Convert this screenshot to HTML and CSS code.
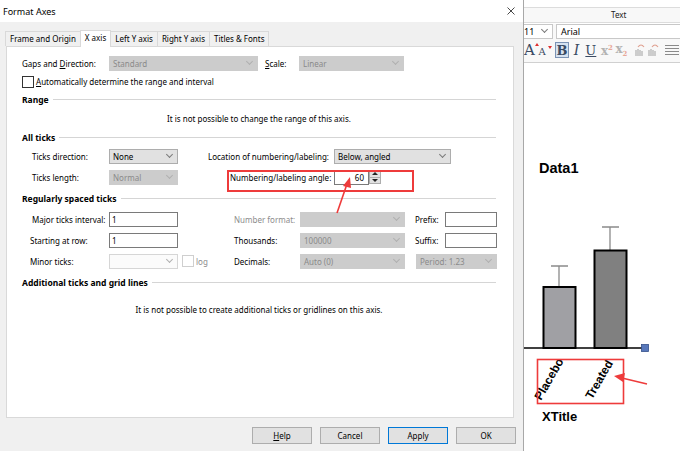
FILE: index.html
```html
<!DOCTYPE html>
<html lang="en">
<head>
  <meta charset="UTF-8">
  <title>Format Axes</title>
  <link rel="stylesheet" href="styles.css">
</head>
<body>
<div class="screen">
  <div class="dialog">
    <div class="titlebar">
      <span>Format Axes</span>
      <svg class="close" width="8" height="8" viewBox="0 0 8 8"><path d="M0.5 0.5 L7.5 7.5 M7.5 0.5 L0.5 7.5" stroke="#333" stroke-width="0.9"/></svg>
    </div>

    <div class="tabs">
      <span class="tab">Frame and Origin</span>
      <span class="tab active">X axis</span>
      <span class="tab">Left Y axis</span>
      <span class="tab">Right Y axis</span>
      <span class="tab">Titles &amp; Fonts</span>
    </div>

    <div class="panel">
      <div class="row">
        <span class="lbl w87">Gaps and <u>D</u>irection:</span>
        <div class="sel dis w149"><span>Standard</span><i class="chev"></i></div>
        <span class="lbl w34 ml7"><u>S</u>cale:</span>
        <div class="sel dis w105"><span>Linear</span><i class="chev"></i></div>
      </div>

      <div class="row check-row">
        <span class="box"></span>
        <span><u>A</u>utomatically determine the range and interval</span>
      </div>

      <div class="head h-range">Range</div>
      <div class="note n-range">It is not possible to change the range of this axis.</div>

      <div class="head h-all">All ticks</div>
      <div class="row r-dir">
        <span class="lbl pl10 w87">Ticks direction:</span>
        <div class="sel w69"><span>None</span><i class="chev"></i></div>
        <span class="lbl ml30 w126">Location of numbering/labeling:</span>
        <div class="sel w117"><span>Below, angled</span><i class="chev"></i></div>
      </div>
      <div class="row r-len">
        <span class="lbl pl10 w87">Ticks length:</span>
        <div class="sel dis w69"><span>Normal</span><i class="chev"></i></div>
        <span class="lbl ml52 w104">Numbering/labeling angle:</span>
        <div class="inp num w35">60</div>
        <div class="spin"><b class="up"></b><b class="down"></b></div>
      </div>

      <div class="head h-reg">Regularly spaced ticks</div>
      <div class="row r-major">
        <span class="lbl pl10 w87">Major ticks interval:</span>
        <div class="inp w69">1</div>
        <span class="lbl ml56 w66 gray">Number format:</span>
        <div class="sel dis w105"><span></span><i class="chev"></i></div>
        <span class="lbl ml10 w30">Prefix:</span>
        <div class="inp w52"></div>
      </div>
      <div class="row r-start">
        <span class="lbl pl8 w87">Starting at row:</span>
        <div class="inp w69">1</div>
        <span class="lbl ml56 w66">Thousands:</span>
        <div class="sel dis w105"><span>100000</span><i class="chev"></i></div>
        <span class="lbl ml10 w30">Suffix:</span>
        <div class="inp w52"></div>
      </div>
      <div class="row r-minor">
        <span class="lbl pl8 w87">Minor ticks:</span>
        <div class="sel ghost w69"><span></span><i class="chev"></i></div>
        <div class="log w56"><span class="box light"></span><span class="gray">log</span></div>
        <span class="lbl w66">Decimals:</span>
        <div class="sel dis w105"><span>Auto (0)</span><i class="chev"></i></div>
        <div class="sel dis w81 ml11"><span>Period: 1.23</span><i class="chev"></i></div>
      </div>

      <div class="head h-add">Additional ticks and grid lines</div>
      <div class="note n-add">It is not possible to create additional ticks or gridlines on this axis.</div>

      <div class="mark"></div>
      <svg class="mark-arrow" width="30" height="44" viewBox="322 128 30 44">
        <path d="M330 166 L340 137" stroke="#ee3b3b" stroke-width="1.6"/>
        <path d="M343 130 L336 139 L344 141 Z" fill="#ee3b3b"/>
      </svg>
    </div>

    <div class="buttons">
      <div class="btn"><u>H</u>elp</div>
      <div class="btn">Cancel</div>
      <div class="btn def">Apply</div>
      <div class="btn">OK</div>
    </div>
  </div>

  <div class="side">
    <div class="side-top"></div>
    <div class="side-head">Text</div>
    <div class="font-row">
      <div class="size-sel"><span>11</span><i class="chev"></i></div>
      <div class="font-inp">Arial</div>
    </div>
    <div class="toolbar">
      <span class="ic big">A<i class="tri up"></i></span>
      <span class="ic small">A<i class="tri down"></i></span>
      <span class="ic bold-btn">B</span>
      <span class="ic ital">I</span>
      <span class="ic und">U</span>
      <span class="ic sup">x<sup>2</sup></span>
      <span class="ic sub">x<sub>2</sub></span>
      <svg class="ic-svg" width="26" height="14" viewBox="0 0 26 14">
        <path d="M2 13 V7 M4 13 V6 M6 13 V7 M8 13 V8" stroke="#b0b0b0" stroke-width="1.2"/>
        <path d="M4 4 Q7 0 10 4" stroke="#e0a090" stroke-width="1.2" fill="none"/>
        <path d="M15 13 V7 M17 13 V6 M19 13 V7 M21 13 V8" stroke="#b0b0b0" stroke-width="1.2"/>
        <path d="M18 4 Q21 0 24 4" stroke="#e0a090" stroke-width="1.2" fill="none"/>
      </svg>
      <svg class="ic-svg" width="16" height="12" viewBox="0 0 16 12">
        <path d="M1 1.5 H15 M1 4.5 H15 M1 7.5 H15 M1 10.5 H15" stroke="#8a8a8a" stroke-width="1"/>
      </svg>
    </div>
    <div class="canvas">
      <svg class="chart" width="156" height="388" viewBox="524 63 156 388">
        <text x="539" y="173" class="c-title">Data1</text>
        <path d="M559 287 V266 M551 266 H568" stroke="#8a8a8a" stroke-width="1.3" fill="none"/>
        <path d="M610 250 V227 M602 227 H619" stroke="#8a8a8a" stroke-width="1.3" fill="none"/>
        <rect x="543.5" y="287" width="32" height="61" fill="#a0a0a4" stroke="#000" stroke-width="2"/>
        <rect x="594.5" y="250.5" width="32" height="97.5" fill="#808080" stroke="#000" stroke-width="2"/>
        <path d="M524 348 H642" stroke="#000" stroke-width="1.5"/>
        <rect x="641.5" y="344.5" width="7" height="7" fill="#5878bb" stroke="#34508a" stroke-width="0.8"/>
        <text class="c-lbl" transform="translate(541 401) rotate(-60)">Placebo</text>
        <text class="c-lbl" transform="translate(592 400) rotate(-60)">Treated</text>
        <rect x="537.5" y="359.5" width="86" height="44" fill="none" stroke="#ee3b3b" stroke-width="1.6"/>
        <path d="M647 384 L622 378" stroke="#ee3b3b" stroke-width="1.6"/>
        <path d="M614 376 L625 373 L623 382 Z" fill="#ee3b3b"/>
        <text x="542" y="421" class="c-x">XTitle</text>
      </svg>
    </div>
  </div>
</div>
</body>
</html>
```

FILE: styles.css
```css
* {
  box-sizing: border-box;
}
body {
  margin: 0;
  width: 680px;
  height: 451px;
  overflow: hidden;
  background: #fff;
  color: #000;
  font-family: "Noto Sans", sans-serif;
  font-size: 8px;
}
.screen {
  display: flex;
  height: 451px;
}

/* dialog */
.dialog {
  width: 523px;
  background: #f0f0f0;
  display: flex;
  flex-direction: column;
}
.titlebar {
  height: 22px;
  background: #fff;
  display: flex;
  align-items: center;
  justify-content: space-between;
  padding: 0 8px 0 3px;
  font-size: 9px;
}
.tabs {
  display: flex;
  align-items: flex-end;
  height: 15px;
  margin: 9px 0 0 5px;
}
.tab {
  height: 15px;
  line-height: 14px;
  padding: 0 4px;
  border: 1px solid #d9d9d9;
  border-bottom: none;
  margin-right: -1px;
  background: #f0f0f0;
}
.tab.active {
  height: 17px;
  background: #fff;
  margin-bottom: -1px;
  position: relative;
  z-index: 1;
}
.panel {
  position: relative;
  width: 508px;
  height: 372px;
  margin-left: 6px;
  padding: 8px 17px 0 15px;
  background: #fff;
  border: 1px solid #d9d9d9;
}
.row {
  display: flex;
  align-items: center;
  height: 16px;
}
.lbl {
  white-space: nowrap;
  flex: none;
}
.gray {
  color: #8c8c8c;
}
.w30 { width: 30px; }
.w34 { width: 34px; }
.w35 { width: 35px; }
.w52 { width: 52px; }
.w56 { width: 56px; }
.w66 { width: 66px; }
.w69 { width: 69px; }
.w81 { width: 81px; }
.w87 { width: 87px; }
.w104 { width: 104px; }
.w105 { width: 105px; }
.w117 { width: 117px; }
.w126 { width: 126px; }
.w149 { width: 149px; }
.ml7 { margin-left: 7px; }
.ml10 { margin-left: 10px; }
.ml11 { margin-left: 11px; }
.ml30 { margin-left: 30px; }
.ml52 { margin-left: 52px; }
.ml56 { margin-left: 56px; }
.pl8 { padding-left: 8px; }
.pl10 { padding-left: 10px; }

.sel {
  flex: none;
  height: 15px;
  display: flex;
  align-items: center;
  justify-content: space-between;
  padding: 0 5px 0 3px;
  background: #e1e1e1;
  border: 1px solid #adadad;
}
.sel.dis {
  background: #cccccc;
  border-color: #cccccc;
  color: #8a8a8a;
}
.sel.ghost {
  background: #fbfbfb;
  border-color: #d6d6d6;
}
.chev {
  width: 5px;
  height: 5px;
  border-right: 1px solid #7a7a7a;
  border-bottom: 1px solid #7a7a7a;
  transform: rotate(45deg);
  margin-top: -3px;
}
.sel.dis .chev,
.sel.ghost .chev {
  border-color: #b0b0b0;
}
.inp {
  flex: none;
  height: 15px;
  line-height: 13px;
  padding: 0 2px;
  background: #fff;
  border: 1px solid #7a7a7a;
}
.inp.num {
  text-align: right;
  padding-right: 4px;
}
.spin {
  width: 12px;
  height: 14px;
  display: flex;
  flex-direction: column;
  border: 1px solid #adadad;
  background: #e1e1e1;
}
.spin b {
  flex: 1;
  display: flex;
  align-items: center;
  justify-content: center;
}
.spin b::after {
  content: "";
  border-left: 3px solid transparent;
  border-right: 3px solid transparent;
}
.spin .up::after {
  border-bottom: 3px solid #222;
}
.spin .down {
  border-top: 1px solid #adadad;
}
.spin .down::after {
  border-top: 3px solid #222;
}

.check-row {
  height: 13px;
  margin-top: 4px;
}
.box {
  width: 12px;
  height: 12px;
  border: 1px solid #333;
  background: #fff;
  margin-right: 2px;
  flex: none;
}
.box.light {
  border-color: #cfcfcf;
}
.log {
  display: flex;
  align-items: center;
  padding-left: 4px;
  flex: none;
}

.head {
  display: flex;
  align-items: center;
  height: 14px;
  font-weight: bold;
  font-size: 8.5px;
  white-space: nowrap;
}
.head::after {
  content: "";
  flex: 1;
  height: 1px;
  background: #d5d5d5;
  margin-left: 4px;
}
.note {
  height: 14px;
  line-height: 14px;
  text-align: center;
}
.h-range { margin-top: 4px; }
.n-range { margin-top: 6px; }
.h-all { margin-top: 4px; }
.r-dir { margin-top: 4px; }
.r-len { margin-top: 5px; }
.h-reg { margin-top: 6px; }
.r-major { margin-top: 6px; }
.r-start { margin-top: 5px; }
.r-minor { margin-top: 5px; }
.h-add { margin-top: 6px; }
.n-add { margin-top: 14px; }

.mark {
  position: absolute;
  left: 220px;
  top: 123px;
  width: 187px;
  height: 22px;
  border: 2px solid #ee3b3b;
}
.mark-arrow {
  position: absolute;
  left: 322px;
  top: 128px;
}

.buttons {
  display: flex;
  justify-content: flex-end;
  gap: 8px;
  padding: 9px 7px 0 0;
}
.btn {
  width: 60px;
  height: 17px;
  line-height: 15px;
  text-align: center;
  background: #e1e1e1;
  border: 1px solid #adadad;
}
.btn.def {
  border-color: #0078d7;
}

/* side app */
.side {
  flex: 1;
  display: flex;
  flex-direction: column;
  border-left: 1px solid #a8a8a8;
  background: #fff;
  overflow: hidden;
}
.side-top {
  height: 7px;
  background: #fff;
}
.side-head {
  height: 16px;
  line-height: 14px;
  padding-left: 87px;
  border-top: 1px solid #dcdcdc;
  border-bottom: 1px solid #dcdcdc;
  background: #f8f8f8;
  font-size: 8px;
  color: #222;
}
.font-row {
  display: flex;
  gap: 3px;
  height: 15px;
  margin-top: 1px;
  background: #f8f8f8;
  font-size: 9px;
}
.size-sel {
  width: 33px;
  margin-left: -4px;
  display: flex;
  align-items: center;
  justify-content: space-between;
  padding: 0 5px 0 3px;
  background: #fff;
  border: 1px solid #c8c8c8;
}
.font-inp {
  flex: 1;
  padding-left: 4px;
  line-height: 13px;
  background: #fff;
  border: 1px solid #c8c8c8;
  border-right: none;
}
.toolbar {
  height: 25px;
  display: flex;
  align-items: center;
  background: #f8f8f8;
  border-bottom: 1px solid #d0d0d0;
  font-family: "DejaVu Serif", serif;
  color: #3a4b63;
}
.ic {
  position: relative;
  display: inline-block;
  line-height: 1;
}
.ic.big {
  font-size: 15px;
  width: 15px;
}
.ic.small {
  font-size: 10px;
  width: 17px;
  margin-top: 4px;
}
.tri {
  position: absolute;
  border-left: 2px solid transparent;
  border-right: 2px solid transparent;
}
.tri.up {
  right: 0;
  top: 0;
  border-bottom: 3px solid #e03030;
}
.tri.down {
  right: 3px;
  top: -1px;
  border-top: 3px solid #e03030;
}
.bold-btn {
  width: 14px;
  height: 16px;
  font-size: 13px;
  font-weight: bold;
  text-align: center;
  line-height: 15px;
  background: #d6e2f0;
  border: 1px solid #7b93b5;
  margin-right: 5px;
}
.ital {
  font-size: 14px;
  font-style: italic;
  width: 12px;
}
.und {
  font-size: 13px;
  text-decoration: underline;
  width: 16px;
}
.sup,
.sub {
  font-size: 12px;
  font-weight: bold;
  color: #b3b3b3;
  width: 15px;
}
.sup sup,
.sub sub {
  font-size: 7px;
  color: #e8a898;
}
.ic-svg {
  flex: none;
  margin-left: 4px;
}
.canvas {
  flex: 1;
  position: relative;
  background: #fff;
}
.chart {
  display: block;
  font-family: "Liberation Sans", Arial, sans-serif;
}
.c-title {
  font-size: 14.5px;
  font-weight: bold;
}
.c-lbl {
  font-size: 12px;
  font-weight: bold;
}
.c-x {
  font-size: 13px;
  font-weight: bold;
}
```
